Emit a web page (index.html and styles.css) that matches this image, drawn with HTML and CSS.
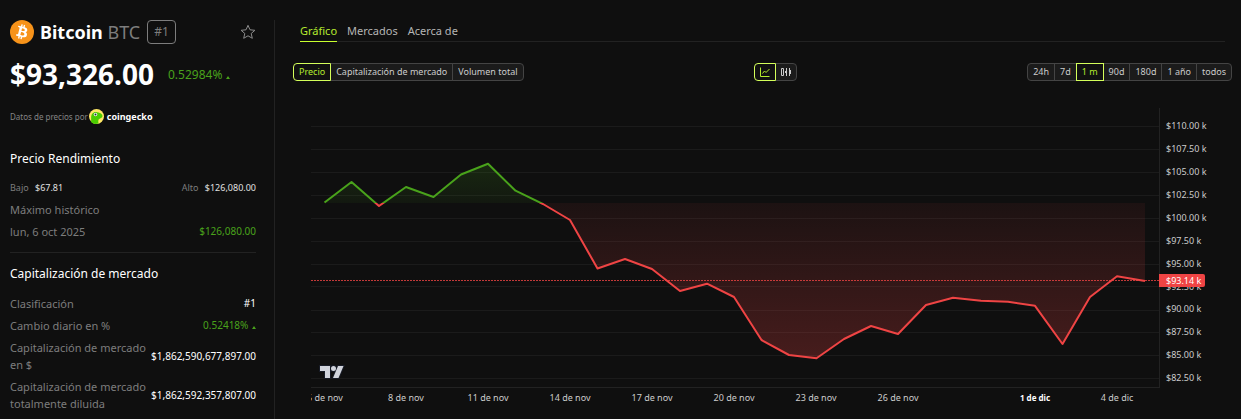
FILE: index.html
```html
<!DOCTYPE html>
<html lang="es">
<head>
<meta charset="utf-8">
<title>Bitcoin BTC</title>
<link rel="stylesheet" href="styles.css">
</head>
<body>
<div class="page">
  <aside class="sidebar">
    <header class="coin">
      <svg class="coin-logo" viewBox="0 0 64 64" aria-hidden="true">
        <circle cx="32" cy="32" r="32" fill="#f7931a"/>
        <path fill="#fff" d="M46.1 27.4c.6-4.3-2.6-6.5-7-8l1.400-5.700-3.500-.9-1.400 5.500-2.800-.6 1.400-5.600-3.500-.9-1.400 5.700-7-1.700-.9 3.700s2.600.6 2.500.6c1.400.4 1.700 1.300 1.600 2l-3.900 15.700c-.2.4-.6 1.100-1.600.8l-2.500-.6-1.700 4 6.900 1.800-1.400 5.700 3.500.9 1.400-5.700 2.800.7-1.400 5.700 3.500.9 1.400-5.700c5.900 1.100 10.400.7 12.300-4.700 1.500-4.300-.1-6.800-3.200-8.400 2.300-.5 4-2 4.500-5.200zm-7.900 11.100c-1.100 4.300-8.300 2-10.600 1.400l1.900-7.600c2.300.6 9.800 1.700 8.700 6.200zm1.100-11.200c-1 3.900-7 1.900-8.900 1.400l1.700-6.900c1.900.5 8.200 1.400 7.200 5.500z"/>
      </svg>
      <h1 class="coin-name">Bitcoin <span class="coin-symbol">BTC</span></h1>
      <span class="rank">#1</span>
      <button class="star" type="button" aria-label="Favorito">
        <svg viewBox="0 0 16 16"><path d="M8 1.300l2 4.500 4.900.5-3.700 3.200 1.100 4.800L8 11.800l-4.300 2.500 1.100-4.800L1.100 6.300 6 5.800z" fill="none" stroke="#8c8c8c" stroke-linejoin="round"/></svg>
      </button>
    </header>
    <div class="quote">
      <strong class="price">$93,326.00</strong>
      <span class="change">0.52984% <i class="up"></i></span>
    </div>
    <div class="source">
      <span>Datos de precios por</span>
      <svg class="gecko" viewBox="0 0 30 30" aria-hidden="true">
        <circle cx="15" cy="15" r="15" fill="#ffe866"/>
        <path fill="#4bcc00" d="M4 26C5 20 3 15 6 10c3-5 9-5 13-3 4 1 8 3 8 7 0 5-7 4-8 8-1 3 0 5 0 7-5 2-11 1-15-3z"/>
        <circle cx="13" cy="11" r="3.500" fill="#fff"/><circle cx="13" cy="11" r="2" fill="#233"/>
      </svg>
      <b class="gecko-name">coingecko</b>
    </div>

    <section class="group">
      <h2 class="group-title">Precio Rendimiento</h2>
      <div class="range">
        <span>Bajo <b>$67.81</b></span>
        <span>Alto <b>$126,080.00</b></span>
      </div>
      <div class="row"><span>Máximo histórico</span></div>
      <div class="row"><span>lun, 6 oct 2025</span><span class="gain">$126,080.00</span></div>
    </section>

    <section class="group divided">
      <h2 class="group-title">Capitalización de mercado</h2>
      <div class="row"><span>Clasificación</span><span class="value">#1</span></div>
      <div class="row"><span>Cambio diario en %</span><span class="gain">0.52418% <i class="up"></i></span></div>
      <div class="row"><span>Capitalización de mercado en $</span><span class="value">$1,862,590,677,897.00</span></div>
      <div class="row"><span>Capitalización de mercado totalmente diluida</span><span class="value">$1,862,592,357,807.00</span></div>
    </section>
  </aside>

  <main class="main">
    <nav class="tabs">
      <a class="tab active" href="#grafico">Gráfico</a>
      <a class="tab" href="#mercados">Mercados</a>
      <a class="tab" href="#acerca">Acerca de</a>
    </nav>
    <div class="toolbar">
      <div class="segments">
        <button class="seg active" type="button">Precio</button>
        <button class="seg" type="button">Capitalización de mercado</button>
        <button class="seg" type="button">Volumen total</button>
      </div>
      <div class="segments">
        <button class="seg icon active" type="button" aria-label="Líneas">
          <svg viewBox="0 0 10 10"><path d="M.5.500v9h9M2.500 6.500l2-2.500 1.500 1.500L9.500 2" fill="none" stroke="currentColor"/></svg>
        </button>
        <button class="seg icon" type="button" aria-label="Velas">
          <svg viewBox="0 0 10 10"><path d="M.5 1.500h2v7h-2zM5.500 1v8M8.500 1v8" fill="none" stroke="currentColor"/><path d="M4 4h2v2H4zM8 3h2v4H8z" fill="currentColor"/></svg>
        </button>
      </div>
      <div class="segments">
        <button class="seg" type="button">24h</button>
        <button class="seg" type="button">7d</button>
        <button class="seg active" type="button">1 m</button>
        <button class="seg" type="button">90d</button>
        <button class="seg" type="button">180d</button>
        <button class="seg" type="button">1 año</button>
        <button class="seg" type="button">todos</button>
      </div>
    </div>
    <svg class="chart" viewBox="311 105 930 310" role="img" aria-label="Precio de Bitcoin, 1 mes">
      <defs>
        <linearGradient id="gain-fill" gradientUnits="userSpaceOnUse" x1="0" y1="163" x2="0" y2="203">
          <stop offset="0" stop-color="#4caf1e" stop-opacity=".16"/><stop offset="1" stop-color="#4caf1e" stop-opacity=".06"/>
        </linearGradient>
        <linearGradient id="loss-fill" gradientUnits="userSpaceOnUse" x1="0" y1="203" x2="0" y2="359">
          <stop offset="0" stop-color="#ef4444" stop-opacity=".06"/><stop offset="1" stop-color="#ef4444" stop-opacity=".25"/>
        </linearGradient>
        <clipPath id="above"><path d="M311 105h850v98H311z"/></clipPath>
        <clipPath id="below"><path d="M311 203h850v200H311z"/></clipPath>
        <clipPath id="plot"><path d="M311 105h930v310H311z"/></clipPath>
        <path id="series" d="M324.500 202.500L351.500 182 379 206 406 187 433.500 197 461 174.500 488 163.700 515.500 190.700 543 204 570 220 597.500 268.500 625 259 652 269 680 291 707 283.700 734 297 761.500 340 789 355 816.500 358.300 844 339 871 326 898 334 926 305 953 297.700 981 300.800 1008 301.800 1035 305.800 1062.500 344 1090 297 1117 276.300 1145 281"/>
        <path id="area" d="M324.500 203V202.500L351.500 182 379 206 406 187 433.500 197 461 174.500 488 163.700 515.500 190.700 543 204 570 220 597.500 268.500 625 259 652 269 680 291 707 283.700 734 297 761.500 340 789 355 816.500 358.300 844 339 871 326 898 334 926 305 953 297.700 981 300.800 1008 301.800 1035 305.800 1062.500 344 1090 297 1117 276.300 1145 281V203z"/>
      </defs>
      <path class="grid" d="M311 126.500h848M311 149.500h848M311 172.500h848M311 195.500h848M311 218.500h848M311 241.500h848M311 264.500h848M311 286.500h848M311 310.500h848M311 332.500h848M311 355.500h848M311 378.500h848"/>
      <path class="axis" d="M311 387.500h848.500M1159.500 108v280"/>
      <use href="#area" fill="url(#gain-fill)" clip-path="url(#above)"/>
      <use href="#area" fill="url(#loss-fill)" clip-path="url(#below)"/>
      <use href="#series" class="line up-line" clip-path="url(#above)"/>
      <use href="#series" class="line down-line" clip-path="url(#below)"/>
      <path class="last" d="M311 280.500h848"/>
      <path fill="#d1d4dc" stroke="#171b26" stroke-width="2" paint-order="stroke" d="M320 366h10v12h-5v-7h-5zM331 368.500a2.500 2.500 0 1 0 5 0a2.500 2.500 0 1 0-5 0M338 366h5.500l-5 12h-5.500z"/>
      <g class="labels">
        <text x="1166" y="129">$110.00 k</text>
        <text x="1166" y="152">$107.50 k</text>
        <text x="1166" y="175">$105.00 k</text>
        <text x="1166" y="198">$102.50 k</text>
        <text x="1166" y="221">$100.00 k</text>
        <text x="1166" y="244">$97.50 k</text>
        <text x="1166" y="267">$95.00 k</text>
        <text x="1166" y="290">$92.50 k</text>
        <text x="1166" y="312">$90.00 k</text>
        <text x="1166" y="335">$87.50 k</text>
        <text x="1166" y="358">$85.00 k</text>
        <text x="1166" y="381">$82.50 k</text>
      </g>
      <path fill="#ef4444" d="M1159 274h44q2 0 2 2v9q0 2-2 2h-44z"/>
      <g class="labels"><text class="current" x="1166" y="284">$93.14 k</text></g>
      <g class="labels dates" clip-path="url(#plot)">
        <text x="325" y="401">5 de nov</text>
        <text x="406" y="401">8 de nov</text>
        <text x="488" y="401">11 de nov</text>
        <text x="570" y="401">14 de nov</text>
        <text x="652" y="401">17 de nov</text>
        <text x="734" y="401">20 de nov</text>
        <text x="816" y="401">23 de nov</text>
        <text x="898" y="401">26 de nov</text>
        <text class="month" x="1035" y="401">1 de dic</text>
        <text x="1117" y="401">4 de dic</text>
      </g>
    </svg>
  </main>
</div>
</body>
</html>
```
FILE: styles.css
```css
* { box-sizing: border-box; }
body {
  margin: 0;
  background: #0f0f0f;
  color: #fff;
  font: 11px/17px "Noto Sans", sans-serif;
}
h1, h2 { margin: 0; }
.page { display: flex; min-height: 100vh; padding-top: 20px; }

.sidebar {
  flex: 0 0 275px;
  padding: 0 18px 0 10px;
  border-right: 1px solid #222;
}
.coin { display: flex; align-items: center; height: 24px; }
.coin-logo { width: 24px; height: 24px; margin-right: 6px; }
.coin-name { font-size: 18px; line-height: 24px; font-weight: 700; white-space: nowrap; }
.coin-symbol { color: #7d7d7d; font-weight: 400; }
.rank {
  margin-left: 7px;
  padding: 0 6px;
  border: 1px solid #7d7d7d;
  border-radius: 4px;
  color: #7d7d7d;
  font-size: 12px;
  line-height: 22px;
}
.star { margin-left: auto; padding: 0; border: 0; background: none; width: 16px; height: 16px; }
.star svg { display: block; width: 16px; height: 16px; }
.quote { display: flex; align-items: center; margin-top: 12px; height: 36px; }
.price { font-size: 28px; line-height: 36px; }
.change { margin-left: 14px; color: #49a21b; font-size: 12px; }
.up {
  display: inline-block;
  margin-left: 1px;
  border: 2px solid transparent;
  border-top: 0;
  border-bottom: 3px solid #49a21b;
}
.source { display: flex; align-items: center; margin-top: 16px; height: 16px; color: #858585; font-size: 8px; }
.gecko { width: 15px; height: 15px; margin: 0 3px 0 1px; }
.gecko-name { color: #fff; font-size: 9px; }

.group { display: flex; flex-direction: column; gap: 5px; margin-top: 26px; }
.group-title { margin-bottom: 6px; font-size: 12px; line-height: 18px; font-weight: 400; }
.range { display: flex; justify-content: space-between; color: #7d7d7d; font-size: 9px; }
.range b { margin-left: 4px; color: #e0e0e0; font-weight: 400; }
.divided { margin-top: 12px; padding-top: 12px; border-top: 1px solid #222; }
.divided .group-title { margin-bottom: 7px; }
.row { display: flex; justify-content: space-between; align-items: center; color: #7d7d7d; }
.gain { color: #49a21b; font-size: 10px; white-space: nowrap; }
.value { color: #fff; font-size: 10px; white-space: nowrap; }

.main { flex: 1; min-width: 0; }
.tabs { display: flex; gap: 10px; margin: 0 16px 0 25px; border-bottom: 1px solid #222; }
.tab { padding: 2px 0; margin-bottom: -1px; color: #b5b5b5; text-decoration: none; border-bottom: 1px solid transparent; }
.tab.active { color: #b5ea2e; border-color: #c8ff2e; }
.toolbar { display: flex; justify-content: space-between; margin: 21px 9px 0 18px; }
.segments { display: flex; }
.seg {
  height: 18px;
  margin: 0 0 0 -1px;
  padding: 0 5px;
  border: 1px solid #444;
  background: #1b1b1b;
  color: #ccc;
  font: 9px/16px "Noto Sans", sans-serif;
}
.seg:first-child { margin-left: 0; border-radius: 4px 0 0 4px; }
.seg:last-child { border-radius: 0 4px 4px 0; }
.seg.active { position: relative; border-color: #d4ff5a; background: #111; color: #b5ea2e; }
.icon svg { display: block; width: 10px; height: 10px; }

.chart { display: block; width: calc(100% - 36px); margin: 24px 0 0 36px; }
.grid, .axis { fill: none; stroke: #1b1b1b; }
.axis { stroke: #222; }
.line { fill: none; stroke-width: 2; stroke-linejoin: round; }
.up-line { stroke: #49a21b; }
.down-line { stroke: #ef4444; }
.last { stroke: #ef4444; stroke-opacity: .8; stroke-dasharray: 2 1; }
.labels { fill: #ccc; font-size: 9px; }
.dates { text-anchor: middle; }
.current { fill: #fff; }
.month { fill: #fff; font-size: 8px; font-weight: 700; }
```
